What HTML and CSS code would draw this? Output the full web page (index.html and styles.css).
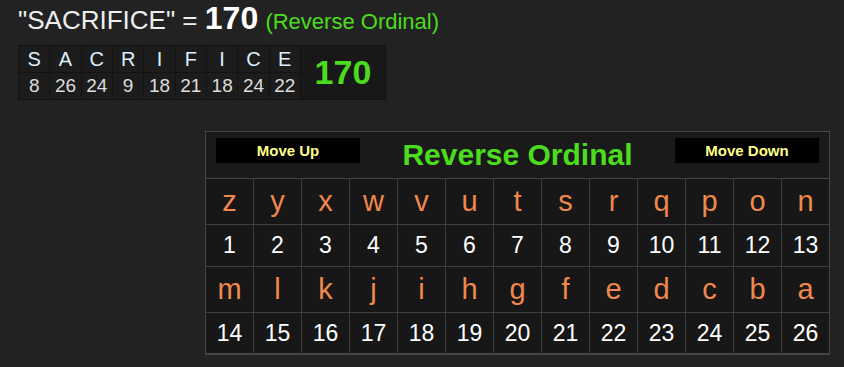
FILE: index.html
```html
<!DOCTYPE html>
<html>
<head>
<meta charset="utf-8">
<link rel="stylesheet" href="styles.css">
</head>
<body>
<div class="page">
  <div class="title">"SACRIFICE" = <span class="total">170</span> <span class="cipher">(Reverse Ordinal)</span></div>

  <div class="word">
    <div class="letters">
      <span class="ch">S</span><span class="ch">A</span><span class="ch">C</span><span class="ch">R</span><span class="ch">I</span><span class="ch">F</span><span class="ch">I</span><span class="ch">C</span><span class="ch">E</span>
      <span class="val">8</span><span class="val">26</span><span class="val">24</span><span class="val">9</span><span class="val">18</span><span class="val">21</span><span class="val">18</span><span class="val">24</span><span class="val">22</span>
    </div>
    <div class="sum">170</div>
  </div>

  <div class="chart">
    <div class="chart-head">
      <button class="move">Move Up</button>
      <div class="chart-title">Reverse Ordinal</div>
      <button class="move">Move Down</button>
    </div>
    <div class="grid">
      <span class="l">z</span><span class="l">y</span><span class="l">x</span><span class="l">w</span><span class="l">v</span><span class="l">u</span><span class="l">t</span><span class="l">s</span><span class="l">r</span><span class="l">q</span><span class="l">p</span><span class="l">o</span><span class="l">n</span>
      <span class="n">1</span><span class="n">2</span><span class="n">3</span><span class="n">4</span><span class="n">5</span><span class="n">6</span><span class="n">7</span><span class="n">8</span><span class="n">9</span><span class="n">10</span><span class="n">11</span><span class="n">12</span><span class="n">13</span>
      <span class="l">m</span><span class="l">l</span><span class="l">k</span><span class="l">j</span><span class="l">i</span><span class="l">h</span><span class="l">g</span><span class="l">f</span><span class="l">e</span><span class="l">d</span><span class="l">c</span><span class="l">b</span><span class="l">a</span>
      <span class="n">14</span><span class="n">15</span><span class="n">16</span><span class="n">17</span><span class="n">18</span><span class="n">19</span><span class="n">20</span><span class="n">21</span><span class="n">22</span><span class="n">23</span><span class="n">24</span><span class="n">25</span><span class="n">26</span>
    </div>
  </div>
</div>
</body>
</html>
```

FILE: styles.css
```css
html, body {
  margin: 0;
  padding: 0;
  background: #222222;
  font-family: "Liberation Sans", Arial, sans-serif;
}

.page {
  padding: 0 0 0 18px;
}

.title {
  box-sizing: border-box;
  height: 36px;
  padding-top: 3px;
  font-size: 26px;
  line-height: 34px;
  color: #eeeeee;
  white-space: nowrap;
}

.title .total {
  display: inline-block;
  line-height: 30px;
  font-size: 32px;
  font-weight: bold;
  color: #ffffff;
}

.title .cipher {
  font-size: 22px;
  color: #4cdc1e;
}

.word {
  display: inline-flex;
  margin-top: 9px;
  padding: 1px;
  gap: 1px;
  background: #131313;
}

.letters {
  display: grid;
  grid-template-columns: repeat(9, 30.33px);
  grid-template-rows: 26px 26px;
  gap: 1px;
}

.letters span {
  background: #1c1c1c;
  text-align: center;
  line-height: 26px;
}

.letters .ch {
  font-size: 20px;
  color: #dcefff;
}

.letters .val {
  font-size: 19px;
  color: #dddddd;
}

.sum {
  width: 84px;
  display: flex;
  align-items: center;
  justify-content: center;
  background: #181818;
  color: #4cdc1e;
  font-size: 34px;
  font-weight: bold;
}

.chart {
  display: block;
  width: 623px;
  margin: 31px 0 0 187px;
  border: 1px solid #464646;
  border-bottom-width: 2px;
  background: #191919;
}

.chart-head {
  display: grid;
  grid-template-columns: 144px 1fr 144px;
  height: 46px;
  padding: 0 10px;
  border-bottom: 1px solid #464646;
  background: #1a1a1a;
}

.move {
  margin-top: 6px;
  height: 25px;
  padding: 0;
  border: none;
  background: #010104;
  color: #ffff88;
  font-family: "Liberation Sans", Arial, sans-serif;
  font-size: 15px;
  font-weight: bold;
  line-height: 25px;
}

.chart-title {
  text-align: center;
  line-height: 46px;
  font-size: 30px;
  font-weight: bold;
  color: #4cdc1e;
}

.grid {
  display: grid;
  grid-template-columns: repeat(13, 47px);
  grid-template-rows: 45px 41px 45px 40px;
  gap: 1px;
  background: #3e3e3e;
}

.grid span {
  background: #171717;
  text-align: center;
}

.grid .l {
  font-size: 29px;
  line-height: 45px;
  color: #f0884e;
}

.grid .n {
  font-size: 23px;
  line-height: 41px;
  color: #ffffff;
}
```
